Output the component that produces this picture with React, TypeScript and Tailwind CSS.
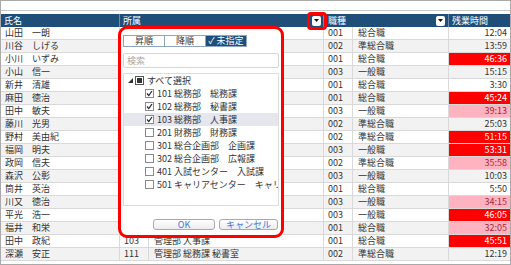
import React from "react";

type Row = {
  name: string;
  deptCode?: string;
  dept?: string;
  jobCode: string;
  job: string;
  time: string;
  level?: "red" | "pink";
};

const rows: Row[] = [
  { name: "山田　一朗", jobCode: "001", job: "総合職", time: "12:04" },
  { name: "川谷　しげる", jobCode: "002", job: "準総合職", time: "13:59" },
  { name: "小川　いずみ", jobCode: "001", job: "総合職", time: "46:36", level: "red" },
  { name: "小山　信一", jobCode: "003", job: "一般職", time: "15:15" },
  { name: "新井　清雄", jobCode: "001", job: "総合職", time: "3:30" },
  { name: "麻田　徳治", jobCode: "001", job: "総合職", time: "45:24", level: "red" },
  { name: "田中　敏夫", jobCode: "003", job: "一般職", time: "39:13", level: "pink" },
  { name: "藤川　光男", jobCode: "002", job: "準総合職", time: "25:03" },
  { name: "野村　美由紀", jobCode: "002", job: "準総合職", time: "51:15", level: "red" },
  { name: "福岡　明夫", jobCode: "003", job: "一般職", time: "53:31", level: "red" },
  { name: "政岡　信夫", jobCode: "002", job: "準総合職", time: "35:58", level: "pink" },
  { name: "森沢　公彰", jobCode: "003", job: "一般職", time: "10:03" },
  { name: "筒井　英治", jobCode: "001", job: "総合職", time: "5:50" },
  { name: "川又　徳治", jobCode: "003", job: "一般職", time: "34:15", level: "pink" },
  { name: "平光　浩一", jobCode: "003", job: "一般職", time: "46:05", level: "red" },
  { name: "福井　和栄", jobCode: "001", job: "総合職", time: "32:05", level: "pink" },
  { name: "田中　政紀", deptCode: "103", dept: "管理部 人事課", jobCode: "001", job: "総合職", time: "45:51", level: "red" },
  { name: "深瀬　安正", deptCode: "111", dept: "管理部 総務課 秘書室", jobCode: "002", job: "準総合職", time: "12:19" },
];

const items = [
  { label: "101 総務部　総務課", checked: true },
  { label: "102 総務部　秘書課", checked: true },
  { label: "103 総務部　人事課", checked: true, hover: true },
  { label: "201 財務部　財務課", checked: false },
  { label: "301 総合企画部　企画課", checked: false },
  { label: "302 総合企画部　広報課", checked: false },
  { label: "401 入試センター　入試課", checked: false },
  { label: "501 キャリアセンター　キャリアサポート課", checked: false },
];

function DropButton() {
  return (
    <span className="flex h-[10px] w-[9px] items-center justify-center rounded-[2px] bg-white">
      <svg width="5" height="3" viewBox="0 0 5 3">
        <polygon points="0,0 5,0 2.5,3" fill="#111" />
      </svg>
    </span>
  );
}

function CheckBox({ checked }: { checked: boolean }) {
  return (
    <span className="flex h-[9px] w-[9px] shrink-0 items-center justify-center border border-[#8a8a8a] bg-white">
      {checked && (
        <svg width="7" height="7" viewBox="0 0 7 7">
          <polyline points="1,3.5 2.8,5.6 6,1" fill="none" stroke="#222" strokeWidth="1.2" />
        </svg>
      )}
    </span>
  );
}

const cols = "grid grid-cols-[119px_29px_175px_29px_96px_61px]";

export default function App() {
  return (
    <div
      className="h-[265px] w-[511px] overflow-hidden bg-white text-[9px] text-[#333]"
      style={{ fontFamily: '"Noto Sans CJK JP", "Noto Sans", sans-serif' }}
    >
      <div className="relative h-full w-full border border-[#a9a9a9]">
        {/* Toolbar strip */}
        <div className="h-[10px] border-b border-[#c9c9c9]" />

        {/* Table */}
        <div className="mt-[3px]">
          <div className={`${cols} h-[13px] bg-[#1f4e78] leading-[13px] text-white`}>
            <div className="border-r border-[#6d8db0] px-[3px]">氏名</div>
            <div className="col-span-2 flex items-center justify-between border-r border-[#6d8db0] pl-[3px] pr-[2px]">
              <span>所属</span>
              <DropButton />
            </div>
            <div className="col-span-2 flex items-center justify-between border-r border-[#6d8db0] pl-[4px] pr-[3px]">
              <span>職種</span>
              <DropButton />
            </div>
            <div className="px-[3px]">残業時間</div>
          </div>

          {rows.map((r, i) => {
            const bg = i % 2 === 1 ? "bg-[#f2f2f2]" : "bg-white";
            const timeCls =
              r.level === "red"
                ? "bg-[#ff0000] text-white"
                : r.level === "pink"
                  ? "bg-[#ffb3c0] text-[#a3283c]"
                  : `${bg} text-[#333]`;
            return (
              <div key={i} className={`${cols} h-[13px] border-b border-[#d9d9d9] leading-[12px] ${bg}`}>
                <div className="truncate border-r border-[#d9d9d9] px-[4px]">{r.name}</div>
                <div className="border-r border-[#d9d9d9] px-[4px]">{r.deptCode}</div>
                <div className="truncate border-r border-[#d9d9d9] px-[5px]">{r.dept}</div>
                <div className="border-r border-[#d9d9d9] px-[4px]">{r.jobCode}</div>
                <div className="border-r border-[#d9d9d9] px-[5px]">{r.job}</div>
                <div className={`px-[3px] text-right ${timeCls}`}>{r.time}</div>
              </div>
            );
          })}
        </div>

        {/* Highlight around the filter button */}
        <div className="absolute left-[306px] top-[11px] h-[18px] w-[20px] rounded-[4px] border-[3px] border-[#ff0000]" />

        {/* Filter popup */}
        <div className="absolute left-[117px] top-[25px] h-[212px] w-[166px] rounded-[9px] border-[3px] border-[#ff0000] bg-white px-[2px] pt-[6px]">
          <div className="flex h-[12px] w-[124px] border border-[#8ea6c2] leading-[10px]">
            <div className="flex-1 border-r border-[#8ea6c2] text-center">昇順</div>
            <div className="flex-1 border-r border-[#8ea6c2] text-center">降順</div>
            <div className="flex-1 bg-[#1f4e78] text-center text-white">✓ 未指定</div>
          </div>

          <div className="mt-[6px] h-[15px] rounded-[2px] border border-[#d6d6d6] px-[3px] leading-[13px] text-[#a8a8a8]">
            検索
          </div>

          <div className="mt-[5px] h-[133px] overflow-hidden border border-[#dcdcdc]">
            <div className="flex h-[13px] items-center gap-[2px] pl-[4px]">
              <svg width="5" height="5" viewBox="0 0 5 5">
                <polygon points="5,0 5,5 0,5" fill="#333" />
              </svg>
              <span className="flex h-[9px] w-[9px] items-center justify-center border border-[#555] bg-white">
                <span className="h-[5px] w-[5px] bg-[#333]" />
              </span>
              <span className="ml-[1px] leading-[12px]">すべて選択</span>
            </div>
            {items.map((it) => (
              <div
                key={it.label}
                className={`flex h-[13px] items-center gap-[3px] whitespace-nowrap pl-[21px] leading-[12px] ${
                  it.hover ? "bg-[#e6e6ef]" : ""
                }`}
              >
                <CheckBox checked={it.checked} />
                <span>{it.label}</span>
              </div>
            ))}
          </div>

          <div className="mt-[13px] flex gap-[4px] pl-[30px]">
            <button className="h-[11px] w-[62px] rounded-[3px] border border-[#a9a9a9] bg-gradient-to-b from-white to-[#ececec] text-[9px] leading-[9px] text-[#3a78d8]">
              OK
            </button>
            <button className="h-[11px] w-[59px] rounded-[3px] border border-[#a9a9a9] bg-gradient-to-b from-white to-[#ececec] text-[9px] leading-[9px] text-[#3a78d8]">
              キャンセル
            </button>
          </div>
        </div>
      </div>
    </div>
  );
}
